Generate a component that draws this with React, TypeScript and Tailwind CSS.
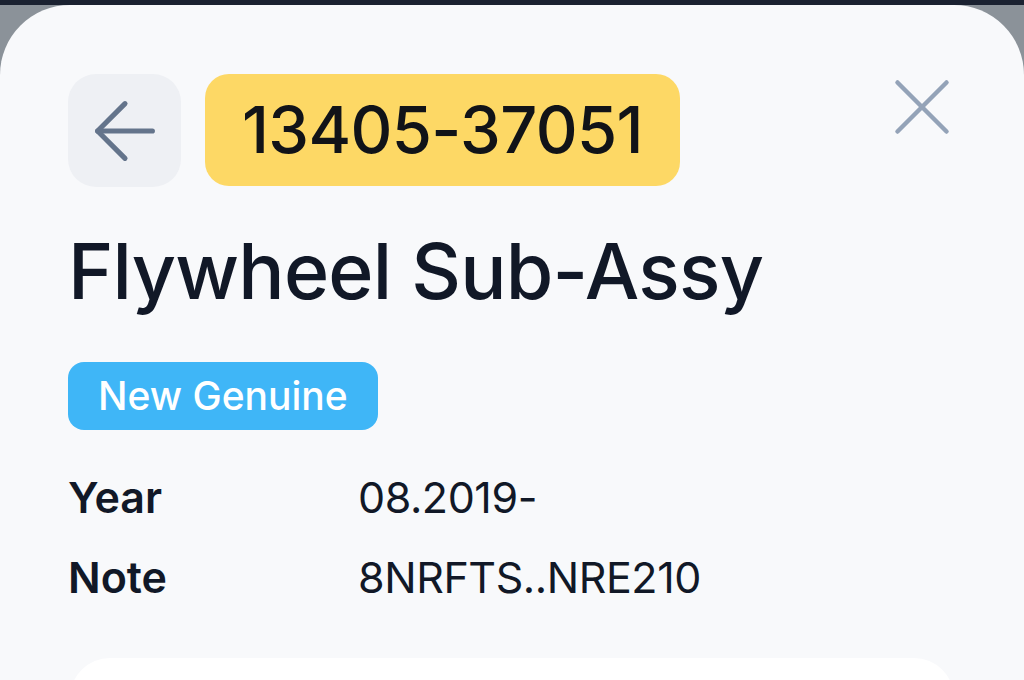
import { ArrowLeft, X } from 'lucide-react';

const specs = [
  { label: 'Year', value: '08.2019-' },
  { label: 'Note', value: '8NRFTS..NRE210' },
];

export default function App() {
  return (
    <div className="w-[1024px] h-[680px] overflow-hidden bg-[#8b9299] font-['Inter',sans-serif]">
      {/* status strip */}
      <div className="h-[5px] bg-[#1b2231]" />

      {/* Sheet */}
      <div className="h-[675px] bg-[#f8f9fb] rounded-t-[70px] px-[68px] pt-[69px]">
        <div className="flex items-start">
          <button className="w-[113px] h-[113px] shrink-0 rounded-[28px] bg-[#eef0f4] flex items-center justify-center text-[#64748b]">
            <ArrowLeft className="w-[94px] h-[94px]" strokeWidth={1.3} />
          </button>
          <div className="ml-6 h-[112px] px-[37px] rounded-[24px] bg-[#fdd865] flex items-center text-[#111318] text-[65px] font-medium tracking-[-0.01em]">
            13405-37051
          </div>
          <button className="ml-auto -mt-[16px] -mr-[15px] w-[98px] h-[98px] flex items-center justify-center text-[#94a3b8]">
            <X className="w-[98px] h-[98px]" strokeWidth={1.1} />
          </button>
        </div>

        <h1 className="mt-[38px] text-[77px] leading-[1.2] font-medium text-[#111827] tracking-[-0.01em]">
          Flywheel Sub-Assy
        </h1>

        <div className="mt-[45px] inline-flex items-center h-[68px] px-[30px] rounded-[16px] bg-[#3fb6f7] text-white text-[39px] font-medium">
          New Genuine
        </div>

        <div className="mt-[42px] flex flex-col gap-[30px]">
          {specs.map(({ label, value }) => (
            <div key={label} className="flex items-center h-[50px] text-[43px] text-[#111827]">
              <span className="w-[290px] font-semibold">{label}</span>
              <span className="tracking-[-0.01em]">{value}</span>
            </div>
          ))}
        </div>

        <div className="mt-[56px] mx-[2px] h-[200px] bg-white rounded-[40px]" />
      </div>
    </div>
  );
}
